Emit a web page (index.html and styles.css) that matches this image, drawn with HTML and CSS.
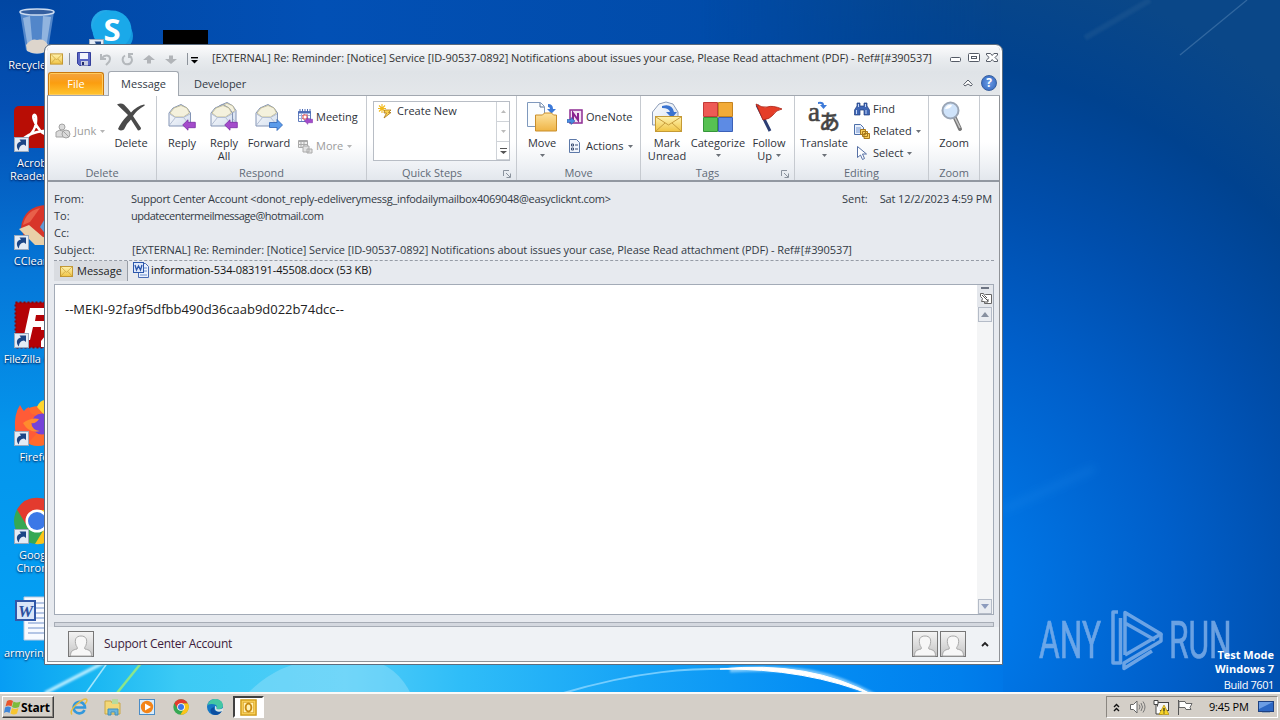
FILE: index.html
```html
<!DOCTYPE html>
<html lang="en">
<head>
<meta charset="utf-8">
<title>Message - Outlook</title>
<link rel="stylesheet" href="styles.css">
</head>
<body>
<svg class="defs" width="0" height="0">
  <defs>
    <linearGradient id="gEnv" x1="0" y1="0" x2="0" y2="1"><stop offset="0" stop-color="#fff3b0"/><stop offset="1" stop-color="#f0c444"/></linearGradient>
    <linearGradient id="gPaper" x1="0" y1="0" x2="1" y2="1"><stop offset="0" stop-color="#fff"/><stop offset="1" stop-color="#d3deee"/></linearGradient>
    <linearGradient id="gFolder" x1="0" y1="0" x2="0" y2="1"><stop offset="0" stop-color="#fde3a0"/><stop offset="1" stop-color="#efb445"/></linearGradient>
    <linearGradient id="gGrey" x1="0" y1="0" x2="0" y2="1"><stop offset="0" stop-color="#f4f4f4"/><stop offset="1" stop-color="#c4c4c4"/></linearGradient>
    <symbol id="mail" viewBox="0 0 14 12"><rect x=".5" y=".5" width="13" height="11" fill="url(#gEnv)" stroke="#c0932a"/><path d="M1 1l6 6 6-6M1 11l4.500-5M13 11L8.500 6" fill="none" stroke="#c9a23e" stroke-width=".8"/></symbol>
    <symbol id="openmail" viewBox="0 0 32 32"><path d="M3 12l4-5 8-3.500L21 7l3.500 5v13H3z" fill="url(#gPaper)" stroke="#8394b5"/><path d="M4 12l4-5 7-2.500 6 2.500 2.500 5-6 4H9z" fill="#f4f1dd" stroke="#b9b28c" stroke-width=".8"/><path d="M3.500 24l6-7.500h8l6.500 7.500M3.500 13l6 3.500M24 13l-6.500 3.500" fill="none" stroke="#b4bfd4"/></symbol>
    <symbol id="leftarrow" viewBox="0 0 14 12"><path d="M.7 6L6 .8v2.500h7.300v5.400H6v2.500z" fill="#a44bcb" stroke="#7a2da3" stroke-width=".8"/></symbol>
    <symbol id="person" viewBox="0 0 26 26"><rect x=".5" y=".5" width="25" height="25" fill="url(#gGrey)" stroke="#777"/><path d="M2.500 25c0-5 2-6 6.500-7 1-1 0-2-.8-3.300C6 8.500 8 5 13 5s7 3.500 4.800 9.700c-.8 1.300-1.800 2.300-.8 3.300 4.500 1 6.500 2 6.500 7z" fill="#f7f7f7" stroke="#a8a8a8"/></symbol>
    <symbol id="shortcut" viewBox="0 0 15 15"><rect x=".5" y=".5" width="14" height="14" fill="#e4ebf5" stroke="#9aa9bd"/><path d="M5 13.500C1.500 10 2.500 5 7 4.500L5.500 2.500H12V9L10 7.500C7 8 5 9.500 5 13.500z" fill="#1b4585"/></symbol>
    <symbol id="down" viewBox="0 0 5 3"><path d="M0 0h5L2.500 3z" fill="currentColor"/></symbol>
    <symbol id="launch" viewBox="0 0 8 8"><path d="M.5 6V.5H6M3 3l4 4M7.500 3.500v4h-4" fill="none" stroke="#8a929d"/></symbol>
    <symbol id="chrome" viewBox="0 0 48 48"><circle cx="24" cy="24" r="23" fill="#35a853"/><path d="M24 13h20.500A23 23 0 0 1 22 47l11-18z" fill="#fcc419"/><path d="M4 12.500A23 23 0 0 1 44 12.500L44.500 13H24L14 29z" fill="#e33b2e"/><circle cx="24" cy="24" r="11.500" fill="#fff"/><circle cx="24" cy="24" r="9" fill="#3b78e7"/></symbol>
  </defs>
</svg>
<div class="desktop">
  <svg class="wallpaper" width="1280" height="720" viewBox="0 0 1280 720">
    <defs>
      <linearGradient id="sideL" x1="0" y1="0" x2="0" y2="1"><stop offset="0" stop-color="#0146a2"/><stop offset=".15" stop-color="#0450b4"/><stop offset=".38" stop-color="#0577d8"/><stop offset=".6" stop-color="#0495ec"/><stop offset=".85" stop-color="#049ff3"/><stop offset="1" stop-color="#05a0f6"/></linearGradient>
      <linearGradient id="top" x1="0" y1="0" x2="1" y2="0"><stop offset="0" stop-color="#0147a4"/><stop offset=".25" stop-color="#0250b5"/><stop offset=".6" stop-color="#014ba8"/><stop offset="1" stop-color="#01448f"/></linearGradient>
      <radialGradient id="right" gradientUnits="userSpaceOnUse" cx="880" cy="610" r="660"><stop offset="0" stop-color="#0082f0"/><stop offset=".2" stop-color="#0076e6"/><stop offset=".45" stop-color="#005fca"/><stop offset=".65" stop-color="#004eac"/><stop offset=".84" stop-color="#00428f"/><stop offset="1" stop-color="#0a4788"/></radialGradient>
      <linearGradient id="bottom" gradientUnits="userSpaceOnUse" x1="0" y1="0" x2="1280" y2="0"><stop offset="0" stop-color="#079df4"/><stop offset=".07" stop-color="#18b6f2"/><stop offset=".14" stop-color="#3ccaf5"/><stop offset=".27" stop-color="#50cdf8"/><stop offset=".36" stop-color="#2fbdf8"/><stop offset=".5" stop-color="#16a3f6"/><stop offset=".64" stop-color="#048df4"/><stop offset=".75" stop-color="#007fec"/><stop offset=".785" stop-color="#0077e7"/><stop offset="1" stop-color="#004ba9"/></linearGradient>
      <linearGradient id="fade" gradientUnits="userSpaceOnUse" x1="700" y1="0" x2="1003" y2="0"><stop offset="0" stop-color="#000"/><stop offset="1" stop-color="#fff"/></linearGradient>
      <mask id="fadeMask"><rect x="700" width="580" height="720" fill="url(#fade)"/></mask>
      <filter id="soft" x="-10%" y="-60%" width="120%" height="220%"><feGaussianBlur stdDeviation="1.2"/></filter>
      <filter id="haze" x="-30%" y="-60%" width="160%" height="220%"><feGaussianBlur stdDeviation="5"/></filter>
    </defs>
    <rect width="1280" height="720" fill="url(#top)"/>
    <rect x="700" width="580" height="720" fill="url(#right)" mask="url(#fadeMask)"/>
    <rect width="60" height="720" fill="url(#sideL)"/>
    <rect y="660" width="1003" height="40" fill="url(#bottom)"/>
    <path d="M1180 55L1247 0" stroke="#4b7db0" stroke-width="1.300" opacity=".6"/>
    <path d="M1085 38L1150 0" stroke="#2e6398" stroke-width="6" opacity=".3" filter="url(#soft)"/>
    <path d="M1003 510L1095 468" stroke="#2d98f2" stroke-width="7" opacity=".2" filter="url(#haze)"/>
    <path d="M245 696Q275 664 315 660h52q30 4 45 36z" fill="#a2e4fa" opacity=".4"/>
    <path d="M45 693L105 662" stroke="#b6ecff" stroke-width="3.500" filter="url(#soft)"/>
    <path d="M86 693L108 662" stroke="#a4e6fc" stroke-width="1.500"/>
    <path d="M117 693L142 662" stroke="#8be58a" stroke-width="2.500"/>
    <path d="M560 694C640 670 690 668 745 669" fill="none" stroke="#85d3ff" stroke-width="2" opacity=".85"/>
    <path d="M730 670C800 666 830 672 875 696" fill="none" stroke="#a8deff" stroke-width="5" opacity=".7" filter="url(#soft)"/>
    <path d="M720 669Q810 660 875 696Q805 668 720 669z" fill="#fff" stroke="#fff"/>
  </svg>

  <div class="shortcut s-bin">
    <svg width="36" height="48" viewBox="0 0 36 48"><path d="M1 4l6 38q11 8 22 0l6-38z" fill="#6e9bd5" opacity=".75"/><path d="M4 10l5 30 5 2L11 8zM24 8l-2 34 5-2 5-31z" fill="#c5daf0" opacity=".55"/><path d="M7 37q6-7 11-5 7-2 11 5l-1 6q-10 5-20 0z" fill="#ddd5cc"/><ellipse cx="18" cy="4" rx="17" ry="3" fill="#355f9f" stroke="#cddcf0" stroke-width="1.500"/></svg>
    <span>Recycle Bin</span>
  </div>
  <div class="shortcut s-skype">
    <svg width="46" height="46" viewBox="0 0 46 46"><circle cx="17" cy="17" r="15" fill="#24a9e8"/><circle cx="29" cy="28" r="15" fill="#159be0"/><circle cx="23" cy="22" r="19.500" fill="#1aa9e9"/></svg>
    <b>S</b>
    <svg class="link" width="15" height="15"><use href="#shortcut"/></svg>
  </div>
  <div class="blackbox"></div>
  <div class="shortcut s-acro">
    <svg width="48" height="48" viewBox="0 0 48 48"><rect x="1" y="1" width="46" height="42" rx="5" fill="#b80d05"/><path d="M11 33c9-3 13-12 12-21-1-4-4-2-2 3 3 9 9 15 15 15 5-1 1-5-6-4-8 1-14 3-19 7z" fill="none" stroke="#fff" stroke-width="2.500"/></svg>
    <span>Acrobat</span><span>Reader DC</span><svg class="link" width="15" height="15"><use href="#shortcut"/></svg>
  </div>
  <div class="shortcut s-cc">
    <svg width="48" height="48" viewBox="0 0 48 48"><path d="M8 25Q10 3 34 2l12 10v24H12z" fill="#d8352a"/><path d="M10 22Q13 8 27 5l-10 14z" fill="#e8604a"/><path d="M27 24L40 2l6 3v20l-12 8z" fill="#5f9bd6"/><path d="M6 26l10-4 14 12 16 2v6H22z" fill="#e9cfa8"/></svg>
    <span>CCleaner</span><svg class="link" width="15" height="15"><use href="#shortcut"/></svg>
  </div>
  <div class="shortcut s-fz">
    <svg width="48" height="48" viewBox="0 0 48 48"><rect x="1.500" y="1.500" width="45" height="45" fill="#b40206" stroke="#8c0408" stroke-width="2" stroke-dasharray="2 2"/><path d="M9 39L16 7h21l-2 7H22l-1 6h11l-1 6H19l-3 13zM27 24h19v6L36 41h10v5H27v-6l9-11h-9z" fill="#fff"/></svg>
    <span>FileZilla Client</span><svg class="link" width="15" height="15"><use href="#shortcut"/></svg>
  </div>
  <div class="shortcut s-ff">
    <svg width="48" height="48" viewBox="0 0 48 48"><circle cx="25" cy="27" r="20" fill="#ff6a2c"/><path d="M24 8q3-7 8-7l15 14v18z" fill="#ffd52e"/><path d="M2 30Q1 15 7 6q2 4 4 6 2-3 5-4 0 5 3 7l7 2q-4 4-9 4 0 8 8 12l-9 10Q4 42 2 30z" fill="#ff5b37"/><circle cx="29" cy="25" r="10.500" fill="#7543d8"/><path d="M10 24q8-6 16-4-3 5-8 4 1 7 9 8-11 3-17-8z" fill="#ff8b2d"/></svg>
    <span>Firefox</span><svg class="link" width="15" height="15"><use href="#shortcut"/></svg>
  </div>
  <div class="shortcut s-gc">
    <svg width="48" height="48"><use href="#chrome"/></svg>
    <span>Google</span><span>Chrome</span><svg class="link" width="15" height="15"><use href="#shortcut"/></svg>
  </div>
  <div class="shortcut s-doc">
    <svg width="48" height="48" viewBox="0 0 48 48"><path d="M10 2h37v43H10z" fill="#f7faff" stroke="#b9c9df"/><path d="M22 8h24M22 13h24M22 18h24M22 23h24M14 28h32M14 33h32M14 38h32" stroke="#9db4dd" stroke-width="1.500"/><rect x="2" y="6" width="19" height="19" fill="#d8e4f8" stroke="#3158a8" stroke-width="2"/></svg>
    <i>W</i><span>armyring.rtf</span>
  </div>

  <div class="window">
    <header class="titlebar">
      <svg class="ti-mail" width="13" height="12"><use href="#mail"/></svg>
      <span class="bar"></span>
      <svg class="ti-save" width="14" height="14" viewBox="0 0 14 14"><path d="M.5.5h13v13h-11l-2-2z" fill="#5a66c4" stroke="#343f9c"/><path d="M3 1h8v6H3z" fill="#f2f4fc"/><path d="M4 9h7v4.500H4z" fill="#c9cee0"/><path d="M5 10h2v3H5z" fill="#222b6e"/></svg>
      <svg class="ti-undo" width="13" height="13" viewBox="0 0 13 13"><path d="M2 1v5h5M2.500 5.500C6 1 11 2 11 6c0 3-2 4-4 6" fill="none" stroke="#b4b8bc" stroke-width="2"/></svg>
      <svg class="ti-redo" width="13" height="13" viewBox="0 0 13 13"><path d="M8 5V1h4M4 2.500C0 5 1.500 11 6 11.300c5 0 6.500-5 3-8.500" fill="none" stroke="#b4b8bc" stroke-width="2"/></svg>
      <svg class="ti-up" width="12" height="9" viewBox="0 0 12 9"><path d="M6 0l6 5H8v3.500H4V5H0z" fill="#b1b4b8"/></svg>
      <svg class="ti-dn" width="12" height="9" viewBox="0 0 12 9"><path d="M6 9l6-5H8V.5H4V4H0z" fill="#b1b4b8"/></svg>
      <span class="bar b2"></span>
      <svg class="ti-more" width="7" height="7" viewBox="0 0 7 7"><path d="M0 .7h7" stroke="#000" stroke-width="1.400"/><path d="M0 3h7L3.500 6.500z"/></svg>
      <span class="title">[EXTERNAL] Re: Reminder: [Notice] Service [ID-90537-0892] Notifications about issues your case, Please Read attachment (PDF) - Ref#[#390537]</span>
      <svg class="ctrl" width="48" height="12" viewBox="0 0 48 12"><g fill="#fff" stroke="#555b66"><rect x=".5" y="5.500" width="10" height="4" rx="1"/><rect x="18.500" y="1.500" width="11" height="8" rx="1"/><rect x="21.500" y="4.500" width="5" height="2"/><path d="M36.500 1.500h4l1.700 2 1.700-2h3.600v1.500L45 5.500l2.500 2.500v1.500h-3.600l-1.700-2-1.700 2h-4V8l2.700-2.500-2.700-2.500z"/></g></svg>
    </header>
    <nav class="tabs">
      <span class="file">File</span><span class="tab active">Message</span><span class="tab dev">Developer</span>
      <svg class="collapse" width="10" height="8" viewBox="0 0 10 8"><path d="M.7 5.500L5 1l4.300 4.500L8 7 5 5 2 7z" fill="#fff" stroke="#555b66"/></svg>
      <span class="help">?</span>
    </nav>
    <section class="ribbon">
      <div class="group g-del">
        <div class="tools">
          <div class="col c-junk"><div class="mini off"><svg width="16" height="16" viewBox="0 0 16 16"><g fill="#dadada" stroke="#a3a3a3"><circle cx="7" cy="4" r="3"/><path d="M1 14V9q3-3 7-1v6z"/><circle cx="11" cy="11" r="4"/><path d="M8 8l6 6"/></g></svg><span>Junk</span><svg class="dd" width="5" height="3"><use href="#down"/></svg></div></div>
          <div class="big b42"><svg width="32" height="32" viewBox="0 0 32 32"><path d="M2 3.500q4-2 7 0 4 4 7 8Q22 5 29 3.500q2 0 0 1.500-7 4-11 10l8 12q0 2-3 2.500l-7-11Q11 23 9 28.500q-4 2-6-.5 3-7 10-14z" fill="#4a4a4a"/></svg><span>Delete</span></div>
        </div><div class="name">Delete</div>
      </div>
      <div class="group g-resp">
        <div class="tools">
          <div class="big b42"><svg width="32" height="32" viewBox="0 0 32 32"><use href="#openmail" width="32" height="32"/><use href="#leftarrow" x="16" y="18" width="14" height="12"/></svg><span>Reply</span></div>
          <div class="big b42"><svg width="32" height="32" viewBox="0 0 32 32"><use href="#openmail" x="5" y="-2" width="32" height="32" transform="scale(.95)"/><use href="#openmail" width="32" height="32"/><use href="#leftarrow" x="16" y="18" width="14" height="12"/></svg><span>Reply</span><span>All</span></div>
          <div class="big b48"><svg width="32" height="32" viewBox="0 0 32 32"><use href="#openmail" width="32" height="32"/><path d="M16.500 21.500H24v-3l5.500 5.500-5.500 5.500v-3h-7.500z" fill="#5b9bea" stroke="#2c62b5" stroke-width=".8"/></svg><span>Forward</span></div>
          <div class="col c-two"><div class="mini"><svg width="16" height="16" viewBox="0 0 16 16"><path d="M1.500 2.500h12v10h-12z" fill="#fff" stroke="#5f7bbd"/><path d="M1 3.500h13" stroke="#4c6cb8" stroke-width="2"/><path d="M2 6.500h11M2 9.500h11M4.500 4v8M7.500 4v8M10.500 4v8" stroke="#9db0dd"/><path d="M3 0v3M5.500 0v3M8 0v3M10.500 0v3M13 0v3" stroke="#4c6cb8"/><path d="M6 6h4v4H6z" fill="#fff" stroke="#d44"/><use href="#leftarrow" x="7" y="8" width="9" height="8"/></svg><span>Meeting</span></div>
          <div class="mini off"><svg width="16" height="16" viewBox="0 0 16 16"><path d="M1.500 2.500h9v7h-9zM1 3.500h10M4 2v8M7 2v8M1 6.500h10" fill="#eee" stroke="#aaa"/><path d="M6 8h6v6H6zM10 11h5v4h-5z" fill="#e2e2e2" stroke="#aaa"/></svg><span>More</span><svg class="dd" width="5" height="3"><use href="#down"/></svg></div></div>
        </div><div class="name">Respond</div>
      </div>
      <div class="group g-quick">
        <div class="tools"><div class="gallery"><div class="entry"><svg width="15" height="15" viewBox="0 0 15 15"><path d="M4 0v9M0 4.500h8M1 1.500l6 6M7 1.500l-6 6" stroke="#f1b91c" stroke-width="1.100"/><path d="M6.500 6h6.500l-2.500 2.500h2.500l-7 5.500 2.500-5H6z" fill="#fbd250" stroke="#a9761c" stroke-width=".8"/></svg><span>Create New</span></div>
          <div class="spin"><i><svg width="5" height="3" viewBox="0 0 5 3"><path d="M0 3h5L2.500 0z" fill="#bbb"/></svg></i><i class="pale"><svg width="5" height="3"><use href="#down"/></svg></i><i><svg width="7" height="6" viewBox="0 0 7 6"><path d="M0 0h7v1H0zM0 3h7L3.500 6z" fill="#555"/></svg></i></div></div></div>
        <div class="name">Quick Steps<svg class="lnch" width="8" height="8"><use href="#launch"/></svg></div>
      </div>
      <div class="group g-move">
        <div class="tools">
          <div class="big b42"><svg width="32" height="32" viewBox="0 0 32 32"><path d="M1.500 1.500h13l4 4v20h-17z" fill="#fafdff" stroke="#7f99bd"/><path d="M14 2v4h4" fill="none" stroke="#5c7091"/><path d="M22 3q5 0 5 5h3l-4.500 4.500L21 8h3q0-2-2-2z" fill="#3d7ad9"/><path d="M9.500 14h7l2-2h7l2 2h3v16h-21z" fill="url(#gFolder)" stroke="#c98e2b"/></svg><span>Move</span><svg class="dd mid" width="5" height="3"><use href="#down"/></svg></div>
          <div class="col c-two"><div class="mini"><svg width="16" height="16" viewBox="0 0 16 16"><rect x="3" y="1" width="12" height="13" fill="#f3e2f4" stroke="#8f2d93" stroke-width="1.500"/><path d="M6 11V4l5 7V4" fill="none" stroke="#8a2390" stroke-width="2"/><path d="M0 10.500h4v-2l4 3.500-4 3.500v-2H0z" fill="#4a8be0" stroke="#2b5aa6" stroke-width=".6"/></svg><span>OneNote</span></div>
          <div class="mini"><svg width="16" height="16" viewBox="0 0 16 16"><path d="M2.500 1.500h7l3 3v10h-10z" fill="#f2f6fd" stroke="#5d79a8"/><path d="M4.500 6h2v2h-2zM4.500 10h2v2h-2zM8 7h3M8 11h3" fill="none" stroke="#3c4f74"/></svg><span>Actions</span><svg class="dd" width="5" height="3"><use href="#down"/></svg></div></div>
        </div><div class="name">Move</div>
      </div>
      <div class="group g-tags">
        <div class="tools">
          <div class="big b44"><svg width="32" height="32" viewBox="0 0 32 32"><path d="M1.500 11L8 3l7-2 7 2 5 8v13H1.500z" fill="url(#gPaper)" stroke="#8c9cb8"/><path d="M11 5q10-3 12 6h3l-5 6-6-6h4q-1-4-8-4z" fill="#3a73d0"/><rect x="4.500" y="15.500" width="26" height="15" fill="url(#gEnv)" stroke="#c59a35"/><path d="M5 16l12.500 8L30 16M5 30l9-8M30 30l-9-8" fill="none" stroke="#c79d3e"/></svg><span>Mark</span><span>Unread</span></div>
          <div class="big b58"><svg width="32" height="32" viewBox="0 0 32 32"><path d="M1.500 1.500h14v14h-14z" fill="#ee5a55" stroke="#c33a38"/><path d="M16.500 1.500h14v14h-14z" fill="#f2ab38" stroke="#c5831f"/><path d="M1.500 16.500h14v14h-14z" fill="#57c152" stroke="#35963a"/><path d="M16.500 16.500h14v14h-14z" fill="#5d8be4" stroke="#3b61b8"/></svg><span>Categorize</span><svg class="dd mid" width="5" height="3"><use href="#down"/></svg></div>
          <div class="big b44"><svg width="32" height="32" viewBox="0 0 32 32"><path d="M4 4l13 26" stroke="#2b3d73" stroke-width="3"/><path d="M3 3q6 4 11 3 6-2 15 2-6 1-9 6-3 4-10 5z" fill="#e53e28" stroke="#a92214" stroke-width=".8"/></svg><span>Follow</span><span class="up">Up<svg class="dd" width="5" height="3"><use href="#down"/></svg></span></div>
        </div><div class="name">Tags<svg class="lnch" width="8" height="8"><use href="#launch"/></svg></div>
      </div>
      <div class="group g-edit">
        <div class="tools">
          <div class="big b51 trans"><div class="glyph"><b>a</b><em>あ</em><svg width="11" height="9" viewBox="0 0 11 9"><path d="M1 1q6-1 6 3h3L6.500 8 3 4h2Q4 2 1 3z" fill="#3d7ad9"/></svg></div><span>Translate</span><svg class="dd mid" width="5" height="3"><use href="#down"/></svg></div>
          <div class="col c-three"><div class="mini"><svg width="16" height="16" viewBox="0 0 16 16"><path d="M3 2h3v3h4V2h3v3l2.500 4v5H10V9H6v5H.5V9L3 5z" fill="#3e65b4" stroke="#213f80" stroke-width=".7"/><path d="M2.500 9v4M12 9v4M4.500 3v3M11.500 3v3" stroke="#c3d6f7"/></svg><span>Find</span></div>
          <div class="mini"><svg width="16" height="16" viewBox="0 0 16 16"><path d="M.5 1.500h6l3 3v7h-9z" fill="#e9f0fc" stroke="#4d6fa9"/><path d="M2 5h5M2 7h6M2 9h6" stroke="#6f92cf"/><path d="M6.500 6.500h5v5h-5zM8.500 8.500h5v5h-5zM10 10.500h5.500v5H10z" fill="#f8cf5d" stroke="#a8781d"/></svg><span>Related</span><svg class="dd" width="5" height="3"><use href="#down"/></svg></div>
          <div class="mini"><svg width="16" height="16" viewBox="0 0 16 16"><path d="M3.500 1.500v11l3-2.500 2 4.500 2-1-2-4.500h4z" fill="#fff" stroke="#5670a5"/></svg><span>Select</span><svg class="dd" width="5" height="3"><use href="#down"/></svg></div></div>
        </div><div class="name">Editing</div>
      </div>
      <div class="group g-zoom">
        <div class="tools"><div class="big b51"><svg width="32" height="32" viewBox="0 0 32 32"><path d="M17 17l5 11" stroke="#777" stroke-width="4" stroke-linecap="round"/><path d="M17 17l5 10" stroke="#c6c6c6" stroke-width="1.500"/><circle cx="12.500" cy="9.500" r="8" fill="#cfe3fa" stroke="#9aa5b5" stroke-width="2"/><path d="M7 8q2-5 7-4-1 4-7 4z" fill="#fff"/></svg><span>Zoom</span></div></div><div class="name">Zoom</div>
      </div>
    </section>
    <section class="headers">
      <div class="row"><label>From:</label><span class="from">Support Center Account &lt;donot_reply-edeliverymessg_infodailymailbox4069048@easyclicknt.com&gt;</span><span class="sent">Sent:</span><span class="date">Sat 12/2/2023 4:59 PM</span></div>
      <div class="row"><label>To:</label><span class="to">updatecentermeilmessage@hotmail.com</span></div>
      <div class="row"><label>Cc:</label></div>
      <div class="row"><label>Subject:</label><span class="subj">[EXTERNAL] Re: Reminder: [Notice] Service [ID-90537-0892] Notifications about issues your case, Please Read attachment (PDF) - Ref#[#390537]</span></div>
    </section>
    <section class="attach">
      <div class="msgtab"><svg width="13" height="11"><use href="#mail"/></svg><span>Message</span></div>
      <div class="docx"><svg width="16" height="16" viewBox="0 0 16 16"><path d="M5.500 1.500h7l3 3v11h-10z" fill="#eaf1fd" stroke="#4a6db5"/><path d="M11 6h3M11 9h3M7 13h7" stroke="#6f92cf"/><rect x=".5" y=".5" width="10" height="10" fill="#dfe9fb" stroke="#2c57ab"/><path d="M2 3l1.500 5 2-4 2 4L9 3" fill="none" stroke="#2c57ab" stroke-width="1.300"/></svg><span>information-534-083191-45508.docx (53 KB)</span></div>
    </section>
    <section class="body">
      <p>--MEKI-92fa9f5dfbb490d36caab9d022b74dcc--</p>
      <div class="scroll"><span class="split"></span><svg class="ruler" width="13" height="13" viewBox="0 0 13 13"><path d="M1.500 1.500h3l1 2 1-1h6v9h-7v-2h-3l1-3-2-2z" fill="#fff" stroke="#666"/><path d="M3 3l6 6M6 4l2 2M9 7v3H6" fill="none" stroke="#555"/></svg><span class="sb"><svg width="8" height="5" viewBox="0 0 8 5"><path d="M0 5h8L4 0z" fill="#8790a0"/></svg></span><span class="grow"></span><span class="sb"><svg width="8" height="5" viewBox="0 0 8 5"><path d="M0 0h8L4 5z" fill="#8c9bbd"/></svg></span></div>
    </section>
    <div class="splitter"></div>
    <footer class="people">
      <svg width="26" height="26"><use href="#person"/></svg><span class="who">Support Center Account</span>
      <svg width="26" height="26"><use href="#person"/></svg><svg class="p2" width="26" height="26"><use href="#person"/></svg>
      <svg class="chev" width="8" height="6" viewBox="0 0 8 6"><path d="M1 5l3-3 3 3" fill="none" stroke="#222" stroke-width="1.800"/></svg>
    </footer>
  </div>

  <div class="brand"><span>ANY</span><svg width="56" height="62" viewBox="0 0 56 62"><g fill="none" stroke="#8fb9ec" stroke-width="3.500" stroke-linejoin="round"><path d="M9 3H4v51h7.500V9"/><path d="M16 46V3.500L52 25 16 46M16 14l30 17"/><path d="M52 25v7L15 54v5.500L43 42"/></g></svg><span class="run">RUN</span></div>
  <div class="build"><b>Test Mode</b><b>Windows 7</b><span>Build 7601</span></div>

  <div class="taskbar">
    <div class="start"><svg width="17" height="16" viewBox="0 0 17 16"><path d="M3 2q3-2 6 0L7.500 7.500q-3-2-6 0z" fill="#e8542a"/><path d="M9.500 2.500q3 2 7 0L15 8q-4 2-7 0z" fill="#7dbb3c"/><path d="M1 8.500q3-2 6 0L5.500 14q-3-2-5.500 0z" fill="#3f86d8"/><path d="M8 9q3 2 6.500 0L13 14.500q-3 2-6.500 0z" fill="#f7c52f"/></svg><b>Start</b></div>
    <div class="quick">
      <svg width="18" height="18" viewBox="0 0 18 18"><path d="M14.500 12A5.700 5.700 0 1 1 15 9.500H5" fill="none" stroke="#3298dc" stroke-width="2.600"/><path d="M2 16.500Q-1 13 7 6t10-4q0 2-2 4" fill="none" stroke="#e9bd3e" stroke-width="1.500"/></svg>
      <svg width="18" height="18" viewBox="0 0 18 18"><path d="M1 3h6l1 2h8v11H1z" fill="#f3d777" stroke="#c9a747"/><path d="M8 1h6v5H8z" fill="#b7db9c"/><path d="M4 17v-6h10v6h-3v-3H7v3z" fill="#6ab5de" stroke="#438fb9"/></svg>
      <svg width="18" height="18" viewBox="0 0 18 18"><rect x="1.500" y="1.500" width="15" height="15" fill="#d9ecfb" stroke="#4a8cc6"/><circle cx="9" cy="9" r="6.200" fill="#f38418"/><path d="M7 5.500l6 3.500-6 3.500z" fill="#fff"/></svg>
      <svg class="q-chrome" width="16" height="16"><use href="#chrome"/></svg>
      <svg width="18" height="18" viewBox="0 0 18 18"><circle cx="9" cy="9" r="8" fill="#1578c5"/><path d="M1.500 7Q4 0 10 1q7 1 7 7-1 4-7 3 2-2 0-4-4-2-8.500 0z" fill="#43c7a4"/><path d="M8 9q-1 6 8 4-4 6-10 3-4-5 2-7z" fill="#0c4fa1"/><path d="M9 8q2 0 1.500 3 4 1 6.500-1v3q-7 2-8-2z" fill="#d8e4e4"/></svg>
    </div>
    <div class="task"><svg width="17" height="17" viewBox="0 0 18 18"><rect x="1" y="1" width="16" height="16" fill="#f9d25c" stroke="#d09a17" stroke-width="1.500"/><rect x="3.500" y="3.500" width="11" height="11" fill="#fff0b5" stroke="#e0ae36"/><ellipse cx="9" cy="9" rx="3" ry="4.200" fill="none" stroke="#c78a10" stroke-width="2"/></svg></div>
    <div class="tray">
      <svg width="7" height="9" viewBox="0 0 7 9"><path d="M1 4l2.500-2.500L6 4M1 8l2.500-2.500L6 8" fill="none" stroke="#111" stroke-width="1.400"/></svg>
      <svg class="t-vol" width="17" height="14" viewBox="0 0 17 14"><path d="M1.500 4.500h3L8 1v12L4.500 9.500h-3z" fill="#fff" stroke="#666"/><path d="M10 4.500q2 2.500 0 5M12 3q3 4 0 8M14 1.500q4 5.500 0 11" fill="none" stroke="#777"/></svg>
      <svg class="t-net" width="16" height="15" viewBox="0 0 16 15"><rect x="4.500" y="2.500" width="11" height="8" fill="#f4f4f4" stroke="#444"/><path d="M1 .5h4v4H1zM3 4v10h6" fill="#fff" stroke="#444"/><path d="M11 5l5 9.500H6z" fill="#f8d427" stroke="#b08e0c" stroke-width=".7"/><path d="M11 8v3.500M11 12.500v1" stroke="#222" stroke-width="1.200"/></svg>
      <svg class="t-flag" width="16" height="15" viewBox="0 0 16 15"><path d="M1.500 0v15" stroke="#555"/><path d="M2 1.500h6l1 2h6l-2 4 1 2H9l-1-2H2z" fill="#fff" stroke="#666"/></svg>
      <span>9:45 PM</span>
      <svg class="t-desk" width="16" height="12" viewBox="0 0 16 12"><rect x=".5" y=".5" width="15" height="10" fill="#2b67c4" stroke="#1d4080"/><path d="M1 1h14L1 8z" fill="#6b9de4"/><path d="M4 11.500h8" stroke="#9ab"/></svg>
    </div>
  </div>
</div>
</body>
</html>
```
FILE: styles.css
```css
* { box-sizing: border-box; }
body { margin: 0; font-family: "Open Sans", "Noto Sans", sans-serif; font-size: 11px; color: #333a45; overflow: hidden; }
svg { display: block; flex: none; }
.defs { position: absolute; }
.desktop { position: relative; width: 1280px; height: 720px; overflow: hidden; white-space: nowrap; }
.wallpaper { position: absolute; left: 0; top: 0; }

/* desktop shortcuts */
.shortcut { position: absolute; left: 0; width: 74px; display: flex; flex-direction: column; align-items: center; color: #fff; line-height: 13px; text-shadow: 0 1px 2px #003; }
.shortcut > svg:first-child { margin-bottom: 3px; }
.shortcut .link { position: absolute; left: 14px; top: 32px; }
.s-bin { top: 8px; }
.s-bin > svg:first-child { margin-bottom: 2px; }
.s-skype { left: 75px; top: 8px; }
.s-skype b { position: absolute; top: 6px; font: 700 31px/30px "Open Sans", sans-serif; text-shadow: none; }
.s-skype .link { top: 31px; }
.s-acro { top: 105px; }
.s-cc { top: 203px; }
.s-fz { top: 301px; left: 1px; letter-spacing: -.1px; }
.s-fz .link { left: 13px; }
.s-ff { top: 399px; }
.s-gc { top: 497px; }
.s-doc { top: 595px; left: 4px; align-items: flex-start; letter-spacing: -.1px; }
.s-doc > svg:first-child { margin-left: 10px; }
.s-doc i { position: absolute; left: 14px; top: 8px; font: italic 700 17px/17px "Liberation Serif", serif; color: #2c4f9e; text-shadow: none; }
.blackbox { position: absolute; left: 163px; top: 30px; width: 45px; height: 20px; background: #000; }

/* window frame */
.window { position: absolute; left: 44px; top: 44px; width: 959px; height: 621px; border: 1px solid #5d6c7e; border-radius: 7px 7px 0 0; background: #e7eaef; display: flex; flex-direction: column; box-shadow: inset 0 0 0 2px #fdfdfd, inset 0 0 0 3px #8f9297; padding: 1px 3px 3px; }
.titlebar { display: flex; align-items: center; height: 26px; margin: 0 -1px; padding-left: 3px; background: linear-gradient(#fbfbfc, #e9ecef 50%, #dfe3e7); border-radius: 5px 5px 0 0; }
.bar { width: 1px; height: 12px; background: #8d939b; margin: 0 7px 0 6px; }
.ti-undo { margin-left: 8px; }
.ti-redo { margin-left: 9px; }
.ti-up { margin-left: 9px; }
.ti-dn { margin-left: 10px; }
.b2 { margin: 0 3px 0 10px; }
.ti-more { margin-top: 2px; }
.title { margin: -3px 0 0 14px; width: 721px; color: #333; letter-spacing: -.088px; }
.ctrl { margin-left: auto; margin-right: 2px; margin-top: -3px; }
.tabs { display: flex; align-items: flex-end; height: 24px; margin: 0 -1px; background: linear-gradient(#dfe3e7, #e4e7ea); border-bottom: 1px solid #a2a8b0; line-height: 22px; flex: none; }
.file { width: 56px; height: 23px; margin-left: 1px; border: 1px solid #c9780e; border-bottom: 0; border-radius: 3px 3px 0 0; color: #fff; text-align: center; background: linear-gradient(#f4a340, #fb9d10 45%, #ffc52e); box-shadow: inset 0 0 0 1px #ffcb5d; }
.tab { height: 23px; text-align: center; }
.active { width: 71px; margin: 0 0 -1px 4px; height: 25px; line-height: 24px; background: #fff; border: 1px solid #a2a8b0; border-bottom: 0; border-radius: 3px 3px 0 0; }
.dev { margin-left: 15px; line-height: 23px; letter-spacing: -.05px; }
.collapse { margin: 0 8px 8px auto; }
.help { width: 16px; height: 16px; margin: 0 3px 4px 0; border-radius: 50%; background: radial-gradient(#6c9de6, #2e62bb); border: 1px solid #375f9f; color: #fff; font-weight: 700; line-height: 14px; text-align: center; font-size: 12px; }

/* ribbon */
.ribbon { display: flex; height: 86px; flex: none; background: linear-gradient(#fff 0, #fff 55%, #edf0f4 85%, #e3e7ed); border-bottom: 2px solid #9298a1; }
.group { display: flex; flex-direction: column; border-right: 1px solid #c6cad0; }
.tools { display: flex; height: 70px; }
.name { position: relative; text-align: center; line-height: 14px; color: #616a77; }
.lnch { position: absolute; right: 5px; top: 4px; }
.g-del { width: 109px; } .g-del .tools { padding-left: 7px; }
.g-resp { width: 210px; } .g-resp .tools { padding-left: 4px; }
.g-quick { width: 150px; } .g-quick .tools { padding: 5px 0 0 6px; } .g-quick .name { padding-right: 19px; }
.g-move { width: 124px; } .g-move .tools { padding-left: 4px; }
.g-tags { width: 154px; } .g-tags .tools { padding-left: 4px; } .g-tags .name { padding-right: 20px; }
.g-edit { width: 134px; } .g-edit .tools { padding-left: 4px; }
.g-zoom { width: 51px; }
.big { display: flex; flex-direction: column; align-items: center; padding-top: 5px; line-height: 13px; color: #2f333a; }
.big > svg:first-child { margin-bottom: 3px; }
.b42 { width: 42px; } .b44 { width: 44px; } .b48 { width: 48px; } .b51 { width: 50px; } .b58 { width: 58px; }
.dd { color: #6c7178; }
.big .mid { margin-top: 5px; }
.up { display: flex; align-items: center; gap: 4px; }
.col { display: flex; flex-direction: column; }
.mini { display: flex; align-items: center; gap: 3px; height: 22px; color: #2f333a; }
.mini span { margin-top: -2px; }
.mini .dd { margin-left: 1px; }
.mini.off { color: #9b9b9b; } .off .dd { color: #b5b5b5; }
.c-junk { width: 55px; padding-top: 24px; }
.c-two { padding: 10px 0 0 4px; gap: 7px; }
.c-three { padding: 2px 0 0 5px; }
.gallery { display: flex; width: 137px; height: 60px; border: 1px solid #b8bdc5; background: #fff; }
.entry { display: flex; gap: 4px; width: 122px; padding: 2px 0 0 4px; align-items: flex-start; line-height: 14px; color: #2f333a; }
.spin { width: 13px; display: grid; grid-template-rows: 20px 20px 1fr; border-left: 1px solid #cfd3d8; color: #bbb; }
.spin i { display: flex; align-items: center; justify-content: center; border-bottom: 1px solid #cfd3d8; }
.glyph { position: relative; width: 32px; height: 32px; margin-bottom: 3px; color: #444; }
.glyph b { position: absolute; left: 0; top: -4px; font: 400 27px/30px "Liberation Serif", serif; -webkit-text-stroke: .6px #444; }
.glyph em { position: absolute; left: 11px; top: 8px; font: 500 21px/22px "Noto Sans CJK JP", sans-serif; -webkit-text-stroke: .5px #444; }
.glyph svg { position: absolute; left: 9px; top: 0; }

/* message headers */
.headers { height: 78px; padding: 8px 5px 0 6px; flex: none; }
.row { display: flex; line-height: 17px; height: 17px; }
.row label { width: 78px; }
.from { letter-spacing: -.29px; margin-left: -1px; }
.to { letter-spacing: -.51px; margin-left: -1px; }
.subj { letter-spacing: -.088px; }
.sent { margin-left: auto; margin-right: 12px; }
.date { letter-spacing: -.13px; margin-right: 2px; }
.attach { display: flex; height: 24px; margin: 0 5px 0 6px; border-top: 1px dashed #969ca6; flex: none; color: #222; }
.msgtab { width: 74px; height: 20px; display: flex; align-items: center; gap: 4px; padding-left: 6px; background: #d9dce1; border-right: 1px solid #989ea7; line-height: 20px; }
.docx { display: flex; align-items: center; gap: 2px; height: 20px; margin-left: 5px; color: #111; letter-spacing: -.12px; }
.docx svg { margin-top: -2px; }
.docx span { margin-top: -3px; }
.body { display: flex; justify-content: space-between; height: 331px; margin: 0 5px 0 6px; border: 1px solid #a3abb7; background: #fff; flex: none; }
.body p { margin: 15px 0 0 10px; font-size: 13px; line-height: 18px; color: #222; letter-spacing: -.03px; }
.scroll { width: 16px; display: flex; flex-direction: column; align-items: center; background: linear-gradient(#e4e7ec 22px, #f4f5f6 22px); }
.split { width: 8px; height: 2px; margin: 2px 0 3px; background: #6d7482; flex: none; }
.sb { width: 14px; height: 15px; display: flex; align-items: center; justify-content: center; border: 1px solid #b4bbc7; background: #e9ecf1; flex: none; }
.ruler { margin-bottom: 2px; }
.grow { flex: 1; }
.splitter { height: 5px; margin: 7px 5px 0 6px; border: 1px solid #a7adb6; background: #d4d8df; flex: none; }
.people { display: flex; align-items: center; height: 34px; flex: none; padding: 0 10px 0 20px; background: #eff2f5; }
.who { margin: -2px auto 0 10px; font-size: 12px; color: #3c1d3c; letter-spacing: -.28px; }
.p2 { margin-left: 2px; }
.chev { margin-left: 15px; }

/* watermark */
.brand { position: absolute; left: 1039px; top: 609px; display: flex; color: #8fb9ec; opacity: .75; }
.brand span { font: 400 52px/64px Roboto, sans-serif; width: 70px; transform: scaleX(.61); transform-origin: 0 50%; -webkit-text-stroke: .7px #8fb9ec; }
.brand .run { margin-left: 4px; transform: scaleX(.61); }
.build { position: absolute; right: 6px; top: 648px; display: flex; flex-direction: column; align-items: flex-end; color: #fff; line-height: 14px; }
.build span { margin-top: 2px; letter-spacing: -.4px; }

/* taskbar */
.taskbar { position: absolute; left: 0; top: 692px; width: 1280px; height: 28px; display: flex; align-items: center; background: #d4cfc8; border-top: 2px solid #fbfaf8; }
.start { display: flex; align-items: center; width: 52px; height: 22px; margin-left: 2px; padding-left: 1px; border: 1px solid; border-color: #fff #404040 #404040 #fff; box-shadow: inset -1px -1px #8a8680; color: #000; font-size: 12px; letter-spacing: -.2px; }
.quick { display: flex; align-items: center; gap: 16px; margin-left: 16px; }
.q-chrome { margin: 0 1px; }
.task { width: 31px; height: 22px; display: flex; align-items: center; justify-content: center; margin-left: 9px; border: 2px solid; border-color: #404040 #fff #fff #404040; background: #fff; }
.tray { display: flex; align-items: center; width: 172px; height: 22px; margin: 0 2px 0 auto; padding-left: 6px; border: 1px solid; border-color: #8a8680 #fff #fff #8a8680; color: #000; }
.t-vol { margin-left: 9px; } .t-net { margin-left: 7px; } .t-flag { margin-left: 8px; }
.tray span { margin: -2px 0 0 16px; letter-spacing: -.2px; }
.t-desk { margin-left: auto; margin-right: 3px; }
```
